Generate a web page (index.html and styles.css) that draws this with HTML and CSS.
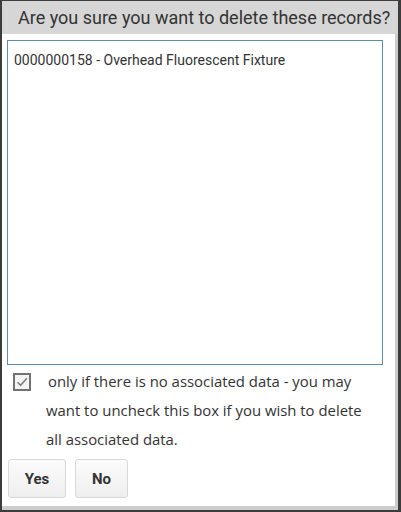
FILE: index.html
```html
<!DOCTYPE html>
<html lang="en">
<head>
  <meta charset="UTF-8" />
  <title>Delete records</title>
  <link rel="stylesheet" href="styles.css">
</head>
<body>
  <div class="dialog">
    <div class="dialog-title">Are you sure you want to delete these records?</div>

    <div class="dialog-body">
      <div class="record-list">
        <div class="record">0000000158 - Overhead Fluorescent Fixture</div>
      </div>

      <div class="option">
        <span class="check-box">
          <svg viewBox="0 0 14 14" aria-hidden="true">
            <path d="M2.5 7.2 L5.6 10.3 L11.8 3.2" fill="none" stroke="#808080" stroke-width="1.6"/>
          </svg>
        </span>
        <span class="option-text">only if there is no associated data - you may want to uncheck this box if you wish to delete all associated data.</span>
      </div>

      <div class="btn-row">
        <button class="btn btn-yes">Yes</button>
        <button class="btn btn-no">No</button>
      </div>
    </div>
  </div>
</body>
</html>
```

FILE: styles.css
```css
/* Base */
html, body {
  margin: 0;
  padding: 0;
  background: #ffffff;
}

/* Fenêtre de dialogue */
.dialog {
  width: 401px;
  height: 512px;
  box-sizing: border-box;
  border: 2px solid #3c3c3c;
  border-top-width: 1px;
  border-right-width: 3px;
  box-shadow: inset -3px -4px 0 #cccccc;
  background: #ffffff;
  display: flex;
  flex-direction: column;
}

.dialog-title {
  height: 33px;
  background: #d6d6d6;
  color: #333333;
  font-family: Roboto, "Liberation Sans", sans-serif;
  font-size: 18px;
  line-height: 33px;
  padding-left: 16px;
  white-space: nowrap;
  overflow: hidden;
}

.dialog-body {
  padding: 6px 15px 0 5px;
}

/* Liste des enregistrements */
.record-list {
  box-sizing: border-box;
  height: 325px;
  border: 1px solid #5e8ea6;
  padding: 11px 6px 0 6px;
}

.record {
  font-family: Roboto, "Liberation Sans", sans-serif;
  font-size: 14px;
  color: #333333;
}

/* Case à cocher + texte */
.option {
  display: flex;
  align-items: flex-start;
  gap: 15px;
  margin-top: 2px;
  padding-left: 6px;
}

.check-box {
  flex: none;
  width: 14px;
  height: 14px;
  border: 2px solid #727272;
  background: #f4f4f4;
  margin-top: 6px;
  display: flex;
  align-items: center;
  justify-content: center;
}
.check-box svg {
  width: 14px;
  height: 14px;
}

.option-text {
  width: 325px;
  text-indent: 2px;
  font-family: "Open Sans", "Liberation Sans", sans-serif;
  font-size: 14.9px;
  line-height: 29px;
  color: #333333;
}

/* Boutons */
.btn-row {
  display: flex;
  gap: 9px;
  margin-top: 5px;
  padding-left: 1px;
}

.btn {
  height: 39px;
  border: 1px solid #d8d8d8;
  border-radius: 3px;
  background: linear-gradient(#fbfbfb, #efefef);
  font-family: Roboto, "Liberation Sans", sans-serif;
  font-weight: 700;
  font-size: 15px;
  color: #333333;
  cursor: pointer;
}
.btn-yes { width: 58px; }
.btn-no { width: 53px; }
```
